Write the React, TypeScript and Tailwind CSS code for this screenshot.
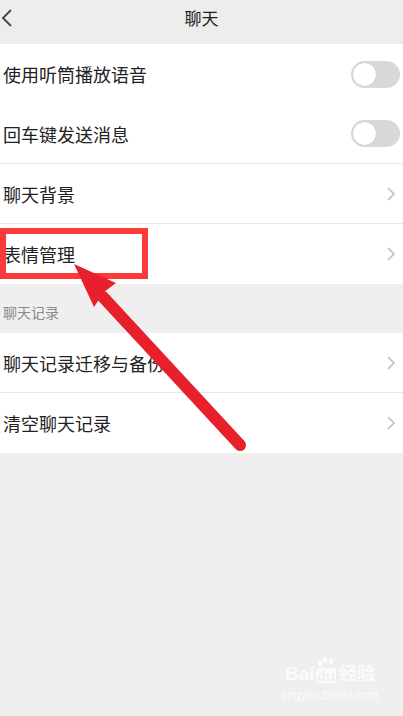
import React from "react";

const font = { fontFamily: '"Noto Sans CJK SC", "Noto Sans", sans-serif' };

function Toggle() {
  return (
    <div className="w-[49px] h-[27px] rounded-full bg-[#d8d8d8] relative flex items-center px-[1px]">
      <div className="w-[25px] h-[25px] rounded-full bg-white border border-[#cfcfcf]" />
    </div>
  );
}

function Chevron() {
  return (
    <svg width="10" height="16" viewBox="0 0 10 16" className="mr-[4px]">
      <path d="M2 2 L8 8 L2 14" fill="none" stroke="#bdbdbd" strokeWidth="1.6" />
    </svg>
  );
}

function Row({ label, right, divider }: { label: string; right: React.ReactNode; divider?: boolean }) {
  return (
    <div className={`h-[60px] bg-white flex items-center justify-between pl-[3px] pr-[3px] ${divider ? "border-b border-[#e8e8e8]" : ""}`}>
      <span className="text-[18px] text-[#222] leading-none">{label}</span>
      {right}
    </div>
  );
}

export default function App() {
  return (
    <div className="relative w-[403px] h-[716px] bg-[#efefef] overflow-hidden" style={font}>
      <div className="h-[44px] relative flex items-center justify-center bg-[#ededed]">
        <svg width="14" height="20" viewBox="0 0 14 20" className="absolute left-[0px] top-[8px]">
          <path d="M11 2 L3 10 L11 18" fill="none" stroke="#444" strokeWidth="1.8" />
        </svg>
        <span className="text-[17px] text-[#222] -mt-[8px]">聊天</span>
      </div>
      <div className="flex flex-col">
        <Row label="使用听筒播放语音" right={<Toggle />} />
        <Row label="回车键发送消息" right={<Toggle />} divider />
        <Row label="聊天背景" right={<Chevron />} divider />
        <Row label="表情管理" right={<Chevron />} />
      </div>
      <div className="h-[49px] flex items-center pl-[3px] pt-[8px]">
        <span className="text-[14px] text-[#8a8a8a]">聊天记录</span>
      </div>
      <div className="flex flex-col">
        <Row label="聊天记录迁移与备份" right={<Chevron />} divider />
        <Row label="清空聊天记录" right={<Chevron />} />
      </div>
      <div className="absolute left-[284px] top-[664px] w-[92px] flex flex-col items-center text-[#fbfbfb]">
        <div className="relative flex items-end leading-none" style={{ fontFamily: '"Liberation Sans", "Noto Sans CJK SC", sans-serif' }}>
          <span className="text-[19px] font-bold">Bai</span>
          <span className="relative text-[15px] font-bold bg-[#fbfbfb] text-[#efefef] rounded-[4px] px-[1px] mx-[1px]">
            du
            <svg width="20" height="12" viewBox="0 0 20 12" className="absolute left-[0px] -top-[12px]">
              <ellipse cx="4" cy="7" rx="2.5" ry="3" fill="#fbfbfb" />
              <ellipse cx="9" cy="4" rx="2.5" ry="3" fill="#fbfbfb" />
              <ellipse cx="15" cy="5" rx="2.5" ry="3" fill="#fbfbfb" />
            </svg>
          </span>
          <span className="text-[18px] font-bold ml-[2px]">经验</span>
        </div>
        <div className="text-[12px] leading-none mt-[6px]" style={{ fontFamily: '"Liberation Sans", sans-serif' }}>jingyan.baidu.com</div>
      </div>
      <div className="absolute left-0 top-[228px] w-[148px] h-[51px] border-[6px] border-[#fb3a3c]" />
      <svg className="absolute left-0 top-0" width="403" height="716" viewBox="0 0 403 716">
        <line x1="103" y1="297" x2="240" y2="445" stroke="#e8202c" strokeWidth="12" strokeLinecap="round" />
        <polygon points="74,264 116,283 104,292 94,307" fill="#e8202c" />
      </svg>
    </div>
  );
}
